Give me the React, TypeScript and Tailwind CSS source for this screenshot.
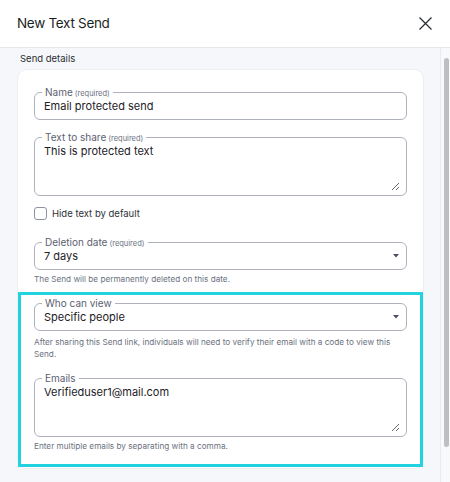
import type { ReactNode } from "react";

const font = { fontFamily: "Inter, 'Noto Sans', sans-serif" };

function Legend({ label, required }: { label: string; required?: boolean }) {
  return (
    <legend className="-ml-[2px] px-[3px] text-[10px] leading-[12px] text-[#5b6170]">
      {label}
      {required && <span className="ml-[2px] text-[7.5px] leading-none text-[#6b7280]">(required)</span>}
    </legend>
  );
}

function Field({ label, required, children }: { label: string; required?: boolean; children: ReactNode }) {
  return (
    <fieldset className="rounded-[6px] border border-[#aeb2bd] pl-[9px] pr-[8px] pb-[5px]">
      <Legend label={label} required={required} />
      {children}
    </fieldset>
  );
}

function SelectField({ label, required, value }: { label: string; required?: boolean; value: string }) {
  return (
    <Field label={label} required={required}>
      <div className="flex h-[16px] items-center justify-between">
        <span className="text-[11px] text-[#1d2127]">{value}</span>
        <svg width="6" height="4" viewBox="0 0 6 4" className="-mr-[1px]">
          <path d="M0 0h6L3 3.5z" fill="#4b5160" />
        </svg>
      </div>
    </Field>
  );
}

function AreaField({ label, required, value }: { label: string; required?: boolean; value: string }) {
  return (
    <fieldset className="rounded-[6px] border border-[#aeb2bd] pl-[9px] pr-[6px] pb-[4px]">
      <Legend label={label} required={required} />
      <textarea
        readOnly
        value={value}
        className="block h-[48px] w-full resize-y bg-transparent text-[11px] leading-[16px] text-[#1d2127] outline-none"
      />
    </fieldset>
  );
}

function Hint({ children }: { children: ReactNode }) {
  return <p className="text-[8.2px] leading-[12px] text-[#6b7180]">{children}</p>;
}

export default function App() {
  return (
    <div style={font} className="flex h-[482px] w-[450px] flex-col overflow-hidden bg-white">
      <div className="flex h-[48px] shrink-0 items-center justify-between border-b border-[#e6e8ec] pl-[17px] pr-[18px]">
        <h1 className="text-[13.5px] tracking-[-0.3px] text-[#1b1f24]">New Text Send</h1>
        <svg width="13" height="13" viewBox="0 0 13 13">
          <path d="M0.5 0.5l12 12M12.5 0.5l-12 12" stroke="#2b2f36" strokeWidth="1.3" />
        </svg>
      </div>

      <div className="flex flex-1 bg-[#f5f7fa]">
        <div className="flex-1 pl-[17px] pr-[16px]">
          <p className="pl-[3px] pt-[4px] text-[9.5px] leading-[14px] text-[#2a2e35]">Send details</p>
          <div className="mt-[3px] rounded-[10px] border border-[#eceef2] bg-white px-[16px] pt-[16px] pb-[1px]">
            <Field label="Name" required>
              <div className="h-[16px] text-[11px] leading-[16px] text-[#1d2127]">Email protected send</div>
            </Field>

            <div className="mt-[11px]">
              <AreaField label="Text to share" required value="This is protected text" />
            </div>

            <label className="mt-[11px] flex h-[13px] items-center gap-[5px]">
              <span className="h-[13px] w-[13px] shrink-0 rounded-[3px] border border-[#8e93a0] bg-white" />
              <span className="text-[9.5px] leading-[13px] text-[#2d3138]">Hide text by default</span>
            </label>

            <div className="mt-[16px]">
              <SelectField label="Deletion date" required value="7 days" />
            </div>
            <div className="mt-[3px]">
              <Hint>The Send will be permanently deleted on this date.</Hint>
            </div>

            <div className="-mx-[16px] mt-[7px] border-[3px] border-[#22d2df] px-[13px] pt-[2px] pb-[12px]">
              <SelectField label="Who can view" value="Specific people" />
              <div className="mt-[5px]">
                <Hint>
                  After sharing this Send link, individuals will need to verify their email with a code to view this
                  <br />
                  Send.
                </Hint>
              </div>
              <div className="mt-[12px]">
                <AreaField label="Emails" value="Verifieduser1@mail.com" />
              </div>
              <div className="mt-[3px]">
                <Hint>Enter multiple emails by separating with a comma.</Hint>
              </div>
            </div>
          </div>
        </div>

        <div className="w-[10px] shrink-0 border-l border-[#e9ebef] bg-[#f8f9fb] pt-[10px] pl-[3px]">
          <div className="h-[389px] w-[5px] rounded-full bg-[#bdbfc3]" />
        </div>
      </div>
    </div>
  );
}
